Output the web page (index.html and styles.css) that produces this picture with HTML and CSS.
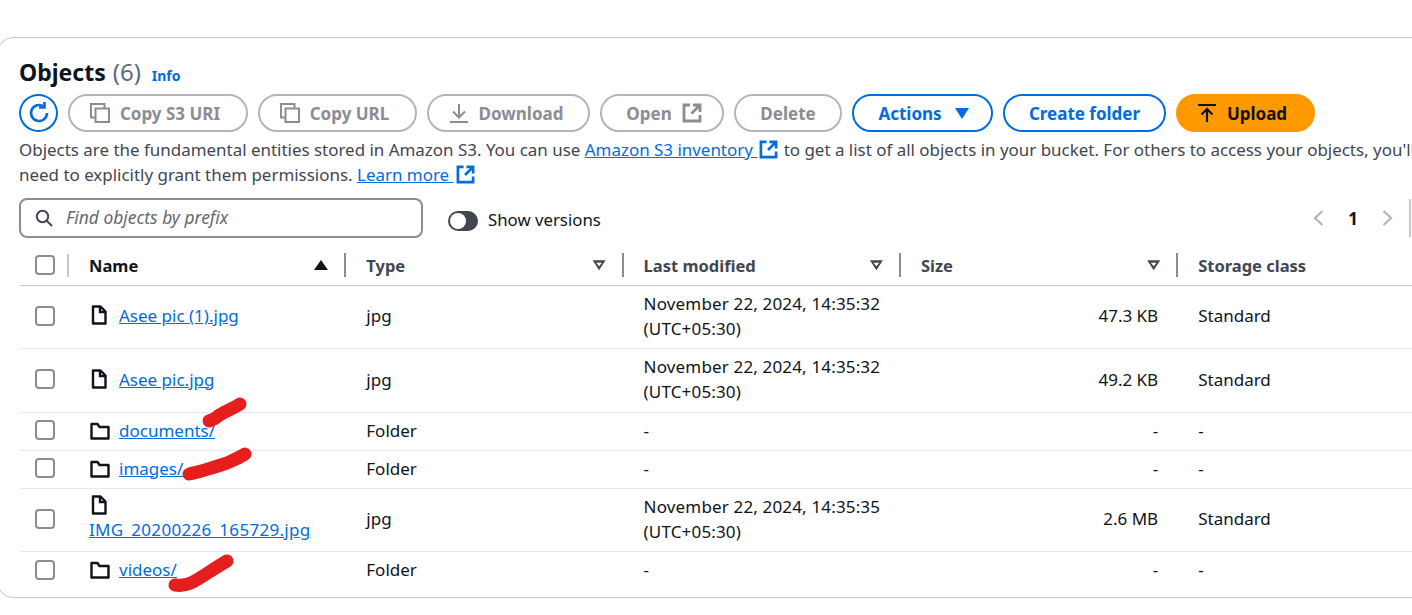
FILE: index.html
```html
<!DOCTYPE html>
<html lang="en">
<head>
  <meta charset="UTF-8" />
  <title>Objects</title>
  <link rel="stylesheet" href="styles.css">
</head>
<body>
  <svg width="0" height="0" class="defs">
    <symbol id="i-copy" viewBox="0 0 20 20"><path d="M5 14.500H1V1h13.500v4" fill="none" stroke="currentColor" stroke-width="2"/><path d="M5.500 5.500H19V19H5.500z" fill="none" stroke="currentColor" stroke-width="2"/></symbol>
    <symbol id="i-down" viewBox="0 0 20 20"><path d="M10 1v13M4 8.500l6 6 6-6M1 19h18" fill="none" stroke="currentColor" stroke-width="2"/></symbol>
    <symbol id="i-ext" viewBox="0 0 20 20"><path d="M8 2H2v16h16v-6" fill="none" stroke="currentColor" stroke-width="2.800"/><path d="M11 2h7v7M18 2l-8.500 8.500" fill="none" stroke="currentColor" stroke-width="2.800"/></symbol>
    <symbol id="i-file" viewBox="0 0 16 20"><path d="M2 1.500h7.500l5 5v12H2z" fill="none" stroke="currentColor" stroke-width="2.400" stroke-linejoin="round"/><path d="M9 2v5h5.500" fill="none" stroke="currentColor" stroke-width="2.400"/></symbol>
    <symbol id="i-folder" viewBox="0 0 20 18"><path d="M1.500 2h6l2 3h9v11.500h-17z" fill="none" stroke="currentColor" stroke-width="2.400" stroke-linejoin="round"/></symbol>
  </svg>

  <div class="card">
    <h2 class="title">Objects <span class="count">(6)</span> <a class="info">Info</a></h2>

    <div class="toolbar">
      <button class="btn-refresh">
        <svg width="24" height="24" viewBox="0 0 24 24"><path d="M20 12a8 8 0 1 1-3.200-6.400" fill="none" stroke="currentColor" stroke-width="2.600"/><path d="M17.500 1v5.500H12" fill="none" stroke="currentColor" stroke-width="2.600"/></svg>
      </button>
      <button class="btn off w-uri"><svg class="ico"><use href="#i-copy"/></svg>Copy S3 URI</button>
      <button class="btn off w-url"><svg class="ico"><use href="#i-copy"/></svg>Copy URL</button>
      <button class="btn off w-down"><svg class="ico"><use href="#i-down"/></svg>Download</button>
      <button class="btn off w-open">Open<svg class="ico"><use href="#i-ext"/></svg></button>
      <button class="btn off w-del">Delete</button>
      <button class="btn blue w-act">Actions<span class="caret"></span></button>
      <button class="btn blue w-new">Create folder</button>
      <button class="btn orange w-up">
        <svg class="ico" viewBox="0 0 20 20"><path d="M1 2h18M10 19V6M4.500 11.500L10 6l5.500 5.500" fill="none" stroke="currentColor" stroke-width="2.200"/></svg>Upload
      </button>
    </div>

    <p class="desc">Objects are the fundamental entities stored in Amazon S3. You can use <a>Amazon S3 inventory </a><svg class="ext"><use href="#i-ext"/></svg> to get a list of all objects in your bucket. For others to access your objects, you'll need to explicitly grant them permissions. <a>Learn more </a><svg class="ext"><use href="#i-ext"/></svg></p>

    <div class="filter-row">
      <div class="search">
        <svg width="18" height="18" viewBox="0 0 18 18"><circle cx="7.500" cy="7.500" r="5.700" fill="none" stroke="#424650" stroke-width="2"/><path d="M11.500 11.500l5.500 5.500" stroke="#424650" stroke-width="2"/></svg>
        <span>Find objects by prefix</span>
      </div>
      <div class="toggle"><i></i></div>
      <span class="toggle-label">Show versions</span>
      <div class="pager">
        <svg width="12" height="18" viewBox="0 0 12 18"><path d="M10.500 2L3 9l7.500 7" fill="none" stroke="#b4b4bb" stroke-width="2.200"/></svg>
        <b>1</b>
        <svg width="12" height="18" viewBox="0 0 12 18"><path d="M1.500 2L9 9l-7.500 7" fill="none" stroke="#b4b4bb" stroke-width="2.200"/></svg>
        <span class="pager-sep"></span>
      </div>
    </div>

    <table class="objects">
      <thead>
        <tr>
          <th class="c-check"><span class="box"></span></th>
          <th class="c-name cur"><div class="th">Name<span class="sort-up"></span></div></th>
          <th class="c-col"><div class="th">Type<span class="sort"></span></div></th>
          <th class="c-col"><div class="th">Last modified<span class="sort"></span></div></th>
          <th class="c-col"><div class="th">Size<span class="sort"></span></div></th>
          <th class="c-last"><div class="th">Storage class</div></th>
        </tr>
      </thead>
      <tbody>
        <tr class="tall">
          <td class="c-check"><span class="box"></span></td>
          <td><svg class="f-ico"><use href="#i-file"/></svg><a>Asee pic (1).jpg</a></td>
          <td>jpg</td>
          <td class="date">November 22, 2024, 14:35:32<br>(UTC+05:30)</td>
          <td class="num">47.3 KB</td>
          <td>Standard</td>
        </tr>
        <tr class="tall">
          <td class="c-check"><span class="box"></span></td>
          <td><svg class="f-ico"><use href="#i-file"/></svg><a>Asee pic.jpg</a></td>
          <td>jpg</td>
          <td class="date">November 22, 2024, 14:35:32<br>(UTC+05:30)</td>
          <td class="num">49.2 KB</td>
          <td>Standard</td>
        </tr>
        <tr class="short">
          <td class="c-check"><span class="box"></span></td>
          <td><svg class="d-ico"><use href="#i-folder"/></svg><a>documents/</a></td>
          <td>Folder</td>
          <td>-</td>
          <td class="num">-</td>
          <td>-</td>
        </tr>
        <tr class="short">
          <td class="c-check"><span class="box"></span></td>
          <td><svg class="d-ico"><use href="#i-folder"/></svg><a>images/</a></td>
          <td>Folder</td>
          <td>-</td>
          <td class="num">-</td>
          <td>-</td>
        </tr>
        <tr class="tall">
          <td class="c-check"><span class="box"></span></td>
          <td class="wrap"><svg class="f-ico block"><use href="#i-file"/></svg><a class="long">IMG_20200226_165729.jpg</a></td>
          <td>jpg</td>
          <td class="date">November 22, 2024, 14:35:35<br>(UTC+05:30)</td>
          <td class="num">2.6 MB</td>
          <td>Standard</td>
        </tr>
        <tr class="short last">
          <td class="c-check"><span class="box"></span></td>
          <td><svg class="d-ico"><use href="#i-folder"/></svg><a>videos/</a></td>
          <td>Folder</td>
          <td>-</td>
          <td class="num">-</td>
          <td>-</td>
        </tr>
      </tbody>
    </table>
  </div>

  <!-- red marker scribbles drawn over the screenshot -->
  <svg class="scribble" width="1412" height="615" viewBox="0 0 1412 615">
    <g fill="none" stroke="#e61e1e" stroke-width="13" stroke-linecap="round" stroke-linejoin="round">
      <path d="M209 421c3-1 6-2 9-5 6-4 14-7 22-12"/>
      <path d="M189 474c10-2 26-7 38-11 6-3 12-5 18-9"/>
      <path d="M175 585c6 1 12 0 18-3 11-6 20-13 34-21"/>
    </g>
  </svg>
</body>
</html>
```

FILE: styles.css
```css
* {
  box-sizing: border-box;
}

html, body {
  margin: 0;
  height: 615px;
  overflow: hidden;
  background: #fff;
}

body {
  position: relative;
  font-family: "Noto Sans", sans-serif;
  font-size: 17px;
  color: #0f141a;
}

.defs {
  position: absolute;
}

a {
  color: #006ce0;
  text-decoration: underline;
}

.card {
  margin: 37px 0 0 -3px;
  width: 1520px;
  height: 561px;
  padding: 17px 0 0 21px;
  border: 1px solid #c6c6cd;
  border-radius: 16px;
}

.title {
  margin: 0;
  height: 34px;
  font-size: 23px;
  line-height: 34px;
  font-weight: 700;
}

.count {
  margin-left: 1px;
  font-size: 24px;
  font-weight: 400;
  color: #5f6b7a;
}

.info {
  margin-left: 5px;
  font-size: 14px;
  font-weight: 700;
  text-decoration: none;
}

.toolbar {
  display: flex;
  align-items: center;
  gap: 10px;
  margin-top: 5px;
  height: 38px;
}

.btn-refresh {
  width: 39px;
  height: 38px;
  padding: 0;
  border: 2px solid #006ce0;
  border-radius: 50%;
  background: #fff;
  color: #006ce0;
  display: flex;
  align-items: center;
  justify-content: center;
}

.btn {
  display: flex;
  align-items: center;
  justify-content: center;
  gap: 10px;
  height: 38px;
  padding: 0;
  border: 2px solid #006ce0;
  border-radius: 20px;
  background: #fff;
  font-family: inherit;
  font-size: 17px;
  font-weight: 700;
  color: #006ce0;
}

.btn.off {
  border-color: #b4b4bb;
  color: #8c8c94;
}

.btn.orange {
  border-color: #ff9900;
  background: #ff9900;
  color: #0f141a;
}

.ico {
  width: 20px;
  height: 20px;
}

.w-uri { width: 180px; padding-right: 6px; }
.w-url { width: 159px; padding-right: 6px; }
.w-down { width: 163px; padding-right: 5px; }
.w-open { width: 124px; padding-left: 4px; }
.w-del { width: 108px; }
.w-act { width: 141px; padding-left: 2px; }
.w-new { width: 163px; }
.w-up { width: 139px; padding-right: 7px; }

.caret {
  width: 0;
  height: 0;
  margin-left: 3px;
  border-left: 7px solid transparent;
  border-right: 7px solid transparent;
  border-top: 11px solid #006ce0;
}

.desc {
  margin: 5px 0 0;
  width: 1400px;
  height: 50px;
  font-size: 16.940px;
  line-height: 25px;
  color: #424650;
  white-space: normal;
}

.ext {
  width: 19px;
  height: 19px;
  margin: 0 1px 0 2px;
  color: #006ce0;
  vertical-align: -3px;
}

.filter-row {
  display: flex;
  align-items: center;
  margin-top: 11px;
  height: 40px;
  width: 1392px;
}

.search {
  display: flex;
  align-items: center;
  gap: 13px;
  width: 404px;
  height: 40px;
  padding-left: 14px;
  border: 2px solid #8c8c94;
  border-radius: 8px;
}

.search span {
  margin-top: -2px;
  font-size: 17.400px;
  font-style: italic;
  color: #656871;
}

.toggle {
  position: relative;
  width: 30px;
  height: 20px;
  margin: 6px 0 0 25px;
  border-radius: 10px;
  background: #424650;
}

.toggle i {
  position: absolute;
  left: 2px;
  top: 2px;
  width: 16px;
  height: 16px;
  border-radius: 50%;
  background: #fff;
}

.toggle-label {
  margin: 2px 0 0 10px;
  font-size: 16.800px;
  color: #0f141a;
}

.pager {
  display: flex;
  align-items: center;
  gap: 24px;
  margin-left: auto;
}

.pager b {
  font-size: 17px;
}

.pager-sep {
  width: 2px;
  height: 38px;
  margin-left: -9px;
  background: #c6c6cd;
}

.objects {
  width: 1400px;
  margin-top: 11px;
  margin-left: 1px;
  border-collapse: collapse;
  table-layout: fixed;
}

.objects th {
  height: 36px;
  padding: 0 0 3px;
  border-bottom: 1px solid #c6c6cd;
  text-align: left;
  font-size: 16.500px;
  font-weight: 700;
  color: #424650;
}

.objects th.cur {
  color: #0f141a;
}

.objects th.c-check,
.objects td.c-check {
  width: 49px;
  padding-left: 15px;
}

.objects th.c-check {
  position: relative;
}

.objects th.c-check::after {
  content: "";
  position: absolute;
  right: 0;
  top: 5px;
  width: 2px;
  height: 23px;
  background: #c6c6cd;
}

.c-name, .c-col {
  width: 277.300px;
}

.th {
  display: flex;
  align-items: center;
  justify-content: space-between;
  height: 24px;
  padding: 0 16px 0 20px;
  border-right: 2px solid #8c8c94;
}

.c-last .th {
  border-right: 0;
}

.sort-up {
  width: 0;
  height: 0;
  border-left: 7px solid transparent;
  border-right: 7px solid transparent;
  border-bottom: 10px solid #0f141a;
}

.sort {
  width: 13px;
  height: 10px;
  background: #424650;
  clip-path: polygon(0 0, 100% 0, 50% 100%, 0 0, 28% 25%, 50% 60%, 72% 25%, 28% 25%);
}

.box {
  display: block;
  width: 20px;
  height: 20px;
  border: 2px solid #8c8c94;
  border-radius: 4px;
}

.objects td {
  padding: 0 0 2px 20px;
  border-bottom: 1px solid #e8e8ec;
  font-size: 17px;
  line-height: 25px;
  color: #0f141a;
  vertical-align: middle;
  white-space: nowrap;
}

.objects td.c-check {
  padding-left: 15px;
}

.tall td { height: 63.500px; }
.short td { height: 38px; }
.last td { height: 46px; border-bottom: 0; padding-bottom: 10px; }

.objects td.num {
  padding-left: 0;
  padding-right: 20px;
  text-align: right;
}

.objects td.date {
  letter-spacing: .16px;
}

.long {
  letter-spacing: .3px;
}

.f-ico {
  width: 16px;
  height: 20px;
  margin: 0 12px 0 2px;
  vertical-align: -3px;
}

.d-ico {
  width: 20px;
  height: 18px;
  margin: 0 9px 0 1px;
  vertical-align: -3px;
}

.f-ico.block {
  display: block;
  margin-bottom: 2px;
}

.scribble {
  position: absolute;
  left: 0;
  top: 0;
  pointer-events: none;
}
```
